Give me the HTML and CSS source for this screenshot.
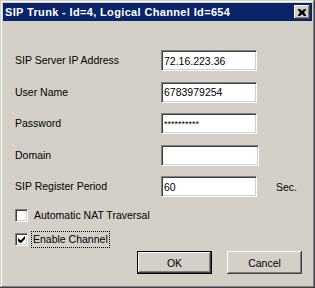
FILE: index.html
```html
<!DOCTYPE html>
<html lang="en">
<head>
    <meta charset="UTF-8">
    <title>SIP Trunk</title>
    <link rel="stylesheet" href="styles.css">
</head>
<body>
    <div class="window">
        <div class="titlebar">
            <span class="title">SIP Trunk - Id=4, Logical Channel Id=654</span>
            <span class="close">
                <svg width="8" height="7" viewBox="0 0 8 7">
                    <path d="M0 0h2l2 2 2-2h2v1l-2 2.5 2 2.5v1h-2l-2-2-2 2h-2v-1l2-2.5-2-2.5z" fill="#000"/>
                </svg>
            </span>
        </div>

        <div class="content">
            <div class="fields">
                <span class="label">SIP Server IP Address</span>
                <input class="edit" type="text" value="72.16.223.36">
                <span></span>

                <span class="label">User Name</span>
                <input class="edit" type="text" value="6783979254">
                <span></span>

                <span class="label">Password</span>
                <input class="edit pass" type="text" value="**********">
                <span></span>

                <span class="label">Domain</span>
                <input class="edit wide" type="text" value="">
                <span></span>

                <span class="label">SIP Register Period</span>
                <input class="edit" type="text" value="60">
                <span class="unit">Sec.</span>
            </div>

            <div class="checks">
                <div class="check">
                    <span class="box"></span>
                    <span class="check-text">Automatic NAT Traversal</span>
                </div>
                <div class="check">
                    <span class="box">
                        <svg width="7" height="7" viewBox="0 0 7 7">
                            <path d="M0 2v3l2 2h1l4-4v-3l-4 4h-1z" fill="#000"/>
                        </svg>
                    </span>
                    <span class="check-text focus">Enable Channel</span>
                </div>
            </div>

            <div class="buttons">
                <button class="btn default">OK</button>
                <button class="btn">Cancel</button>
            </div>
        </div>
    </div>
</body>
</html>
```

FILE: styles.css
```css
html, body {
    margin: 0;
    padding: 0;
}

body {
    font-family: 'Liberation Sans', Arial, sans-serif;
    font-size: 10.5px;
    color: #000;
    background: #d4d0c8;
}

.window {
    width: 315px;
    height: 288px;
    box-sizing: border-box;
    padding: 3px;
    background: #d4d0c8;
    box-shadow:
        inset -1px -1px #404040,
        inset 1px 1px #d4d0c8,
        inset -2px -2px #808080,
        inset 2px 2px #fff;
    display: flex;
    flex-direction: column;
}

.titlebar {
    height: 18px;
    background: #0a246a;
    display: flex;
    align-items: center;
    justify-content: space-between;
    padding: 0 2px 0 2px;
}

.title {
    color: #fff;
    font-weight: bold;
    font-size: 11px;
    letter-spacing: 0.35px;
}

.close {
    width: 16px;
    height: 14px;
    box-sizing: border-box;
    background: #d4d0c8;
    box-shadow:
        inset -1px -1px #404040,
        inset 1px 1px #fff,
        inset -2px -2px #808080;
    display: flex;
    align-items: center;
    justify-content: center;
    padding-top: 1px;
}

.content {
    padding: 29px 10px 0 12px;
}

.fields {
    display: grid;
    grid-template-columns: 146px auto auto;
    row-gap: 10.5px;
    align-items: center;
}

.label {
    line-height: 13px;
}

.edit {
    width: 96px;
    height: 21px;
    box-sizing: border-box;
    margin: 0;
    padding: 0 2px;
    border: 1px solid;
    border-color: #808080 #fff #fff #808080;
    box-shadow: inset 1px 1px #404040, inset -1px -1px #d4d0c8;
    background: #fff;
    font-family: 'Liberation Sans', Arial, sans-serif;
    font-size: 10.5px;
    color: #000;
    outline: none;
}

.edit.wide {
    width: 98px;
}

.edit.pass {
    font-size: 9px;
}

.unit {
    margin-left: 12px;
}

.checks {
    margin-top: 12px;
    display: flex;
    flex-direction: column;
    gap: 11px;
}

.check {
    display: flex;
    align-items: center;
    height: 13px;
}

.box {
    width: 13px;
    height: 13px;
    box-sizing: border-box;
    background: #fff;
    border: 1px solid;
    border-color: #808080 #fff #fff #808080;
    box-shadow: inset 1px 1px #404040, inset -1px -1px #d4d0c8;
    display: flex;
    align-items: center;
    justify-content: center;
}

.check-text {
    margin-left: 5px;
    line-height: 13px;
    padding: 0 1px;
}

.focus {
    margin-left: 4px;
    outline: 1px dotted #000;
    outline-offset: 0;
    padding: 1px 1px;
}

.buttons {
    margin-top: 5px;
    display: flex;
    justify-content: flex-end;
    gap: 15px;
}

.btn {
    width: 75px;
    height: 23px;
    box-sizing: border-box;
    margin: 0;
    padding: 0;
    border: none;
    background: #d4d0c8;
    font-family: 'Liberation Sans', Arial, sans-serif;
    font-size: 10.5px;
    color: #000;
    box-shadow:
        inset -1px -1px #404040,
        inset 1px 1px #fff,
        inset -2px -2px #808080,
        inset 2px 2px #d4d0c8;
}

.btn.default {
    border: 1px solid #000;
}
```
